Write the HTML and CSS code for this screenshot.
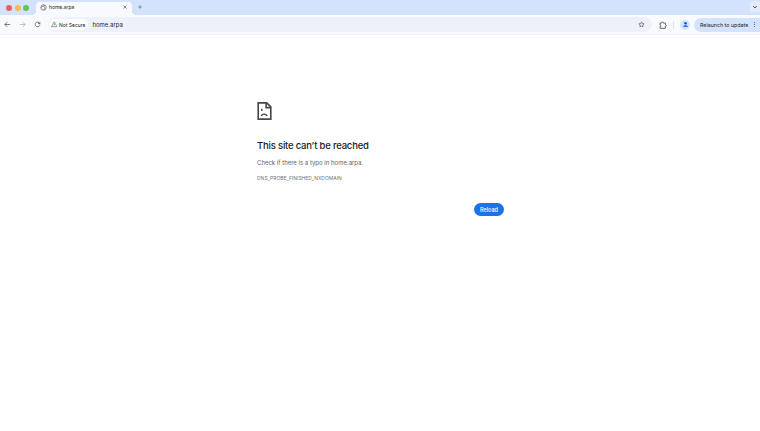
FILE: index.html
```html
<!DOCTYPE html>
<html lang="en">

<head>
  <meta charset="UTF-8">
  <title>home.arpa</title>
  <link rel="stylesheet" href="styles.css">
</head>

<body>
  <div class="tabstrip">
    <div class="lights">
      <span class="light red"></span>
      <span class="light yellow"></span>
      <span class="light green"></span>
    </div>
    <div class="tab">
      <svg class="globe" viewBox="0 0 12 12"><circle cx="6" cy="6" r="4.6"/><path d="M1.5 6c2 0 2-2.500 4-2.500s1 2 2.500 2.500-1 3.500-2 4.500M6 1.500c1 1 2.500 1 3 1"/></svg>
      <span class="tab-title">home.arpa</span>
      <svg class="tab-close" viewBox="0 0 8 8"><path d="M1 1l6 6M7 1L1 7"/></svg>
    </div>
    <svg class="new-tab" viewBox="0 0 8 8"><path d="M4 .5v7M.5 4h7"/></svg>
    <div class="tab-search">
      <svg viewBox="0 0 8 8"><path d="M1.500 2.800L4 5.200l2.500-2.400"/></svg>
    </div>
  </div>

  <div class="toolbar">
    <svg class="nav-icon" viewBox="0 0 12 12"><path d="M10.500 6h-9M5.500 2l-4 4 4 4"/></svg>
    <svg class="nav-icon off" viewBox="0 0 12 12"><path d="M1.500 6h9M6.500 2l4 4-4 4"/></svg>
    <svg class="nav-icon" viewBox="0 0 12 12"><path d="M10 6a4 4 0 1 1-1.200-2.900L10 4.300M10 1.500v2.800H7.200"/></svg>
    <div class="omnibox">
      <div class="chip">
        <svg viewBox="0 0 10 10"><path d="M5 1.200L9.300 8.800H.7zM5 4v2.500M5 7.200v.6"/></svg>
        <span>Not Secure</span>
      </div>
      <span class="url">home.arpa</span>
      <svg class="star" viewBox="0 0 12 12"><path d="M6 1.500l1.350 2.950 3.150.35-2.350 2.150.65 3.150L6 8.500l-2.800 1.600.65-3.150L1.500 4.800l3.150-.35z"/></svg>
    </div>
    <svg class="puzzle" viewBox="0 0 12 12"><path d="M1.500 3h2.300a1.400 1.400 0 0 1 2.800 0h2.900v2.300a1.400 1.400 0 0 1 0 2.800V11H1.500V8.600a1.300 1.300 0 0 0 0-2.600z"/></svg>
    <div class="divider"></div>
    <div class="avatar">
      <svg viewBox="0 0 10 10"><circle cx="5" cy="3.300" r="1.800"/><path d="M1.500 8.300c0-3 7-3 7 0z"/></svg>
    </div>
    <div class="relaunch">
      <span>Relaunch to update</span>
      <div class="dots"><i></i><i></i><i></i></div>
    </div>
  </div>

  <main class="page">
    <div class="error">
      <svg class="sad-file" viewBox="0 0 16 20">
        <path class="outline" d="M1 1h9.500L15 5.500V19H1z"/>
        <path class="outline" d="M9.800 1v5.200H15"/>
        <path class="face" d="M5 7.500v2.500M4.500 15.500c.8-2.800 5-2.800 6.500 0"/>
      </svg>
      <h1>This site can’t be reached</h1>
      <p class="message">Check if there is a typo in home.arpa.</p>
      <div class="code">DNS_PROBE_FINISHED_NXDOMAIN</div>
      <div class="buttons">
        <button class="reload">Reload</button>
      </div>
    </div>
  </main>
</body>

</html>
```

FILE: styles.css
```css
* {
  box-sizing: border-box;
}

body {
  margin: 0;
  padding: 0;
  height: 431px;
  overflow: hidden;
  background-color: white;
  font-family: Inter, "Liberation Sans", sans-serif;
  color: #1f1f1f;
}

svg {
  display: block;
  fill: none;
  stroke: #474747;
}

/* Tab strip */
.tabstrip {
  height: 15px;
  background-color: #d3e3fd;
  display: flex;
  align-items: flex-end;
}

.lights {
  display: flex;
  gap: 2.500px;
  width: 36px;
  padding-left: 6px;
  align-self: center;
}

.light {
  width: 6px;
  height: 6px;
  border-radius: 50%;
}

.red {
  background-color: #ec5f57;
}

.yellow {
  background-color: #f4bd4f;
}

.green {
  background-color: #61c454;
}

.tab {
  position: relative;
  width: 96px;
  height: 13px;
  background-color: #f8fafd;
  border-radius: 4px 4px 0 0;
  display: flex;
  align-items: center;
  padding: 0 4px 3px;
}

/* concave corners at the foot of the tab */
.tab::before,
.tab::after {
  content: "";
  position: absolute;
  bottom: 0;
  width: 4px;
  height: 4px;
}

.tab::before {
  left: -4px;
  background: radial-gradient(circle at 0 0, transparent 4px, #f8fafd 4px);
}

.tab::after {
  right: -4px;
  background: radial-gradient(circle at 100% 0, transparent 4px, #f8fafd 4px);
}

.globe {
  width: 7px;
  height: 7px;
  stroke-width: 1;
}

.tab-title {
  margin-left: 2px;
  font-size: 5px;
  flex: 1;
}

.tab-close {
  width: 4px;
  height: 4px;
  margin-right: 1px;
  stroke-width: 1.300;
}

.new-tab {
  width: 4px;
  height: 4px;
  margin: 0 0 6px 6px;
  stroke-width: 1;
}

.tab-search {
  margin-left: auto;
  margin-right: 0;
  width: 10px;
  height: 11px;
  margin-bottom: 3px;
  border-radius: 3px;
  background-color: #e4ecfb;
  display: flex;
  align-items: center;
  justify-content: center;
}

.tab-search svg {
  width: 6px;
  height: 6px;
  stroke-width: 1.300;
}

/* Toolbar */
.toolbar {
  height: 20px;
  background-color: #f8fafd;
  border-bottom: 1px solid #eef0f3;
  display: flex;
  align-items: center;
  padding-left: 4px;
}

.nav-icon {
  width: 7px;
  height: 7px;
  margin-right: 8px;
  stroke-width: 1.200;
}

.nav-icon.off {
  stroke: #a8abaf;
}

.omnibox {
  width: 604px;
  height: 15px;
  margin-left: -1px;
  margin-right: 7px;
  border-radius: 8px;
  background-color: #edf2fa;
  display: flex;
  align-items: center;
  padding: 0 7px 0 1px;
}

.chip {
  height: 11px;
  padding: 0 3px 0 1.500px;
  border-radius: 6px;
  background-color: #fbfcfe;
  display: flex;
  align-items: center;
  gap: 2px;
  font-size: 5px;
}

.chip svg {
  width: 6.500px;
  height: 6.500px;
  stroke-width: .8;
}

.url {
  margin-left: 4px;
  font-size: 6px;
  flex: 1;
}

.star {
  width: 7px;
  height: 7px;
  stroke-width: 1;
}

.puzzle {
  width: 8px;
  height: 8px;
  stroke-width: 1.200;
}

.divider {
  width: 1px;
  height: 8px;
  margin: 0 6px;
  background-color: #dfe3e8;
}

.avatar {
  width: 10px;
  height: 10px;
  border-radius: 50%;
  background-color: #d3e3fd;
  display: flex;
  align-items: center;
  justify-content: center;
}

.avatar svg {
  width: 7px;
  height: 7px;
  fill: #0b57d0;
  stroke: none;
}

.relaunch {
  height: 14px;
  flex: 1;
  margin-left: 4px;
  border-radius: 7px 0 0 7px;
  background-color: #d3e3fd;
  display: flex;
  align-items: center;
  justify-content: space-between;
  padding: 0 5px 0 6px;
  font-size: 5.300px;
  white-space: nowrap;
}

.dots {
  display: flex;
  flex-direction: column;
  gap: 1px;
}

.dots i {
  display: block;
  width: 1.300px;
  height: 1.300px;
  border-radius: 50%;
  background-color: #474747;
}

/* Error page */
.page {
  padding-top: 67px;
  padding-left: 257px;
}

.error {
  width: 247px;
}

.sad-file {
  width: 15px;
  height: 18px;
}

.outline {
  stroke: #474747;
  stroke-width: 1.800;
}

.face {
  stroke: #474747;
  stroke-width: 1.500;
}

h1 {
  margin: 18px 0 0;
  font-size: 9.500px;
  letter-spacing: -.2px;
  line-height: 15px;
  font-weight: 500;
  color: #202124;
}

.message {
  margin: 5px 0 0;
  font-size: 6px;
  line-height: 10px;
  color: #5f6368;
}

.code {
  margin-top: 6px;
  font-size: 5px;
  line-height: 8px;
  color: #70757a;
}

.buttons {
  margin-top: 21px;
  display: flex;
  justify-content: flex-end;
}

.reload {
  width: 30px;
  height: 13px;
  padding: 0;
  border: none;
  border-radius: 7px;
  background-color: #1a73e8;
  color: white;
  font-family: inherit;
  font-size: 5.500px;
  font-weight: 500;
}
```
